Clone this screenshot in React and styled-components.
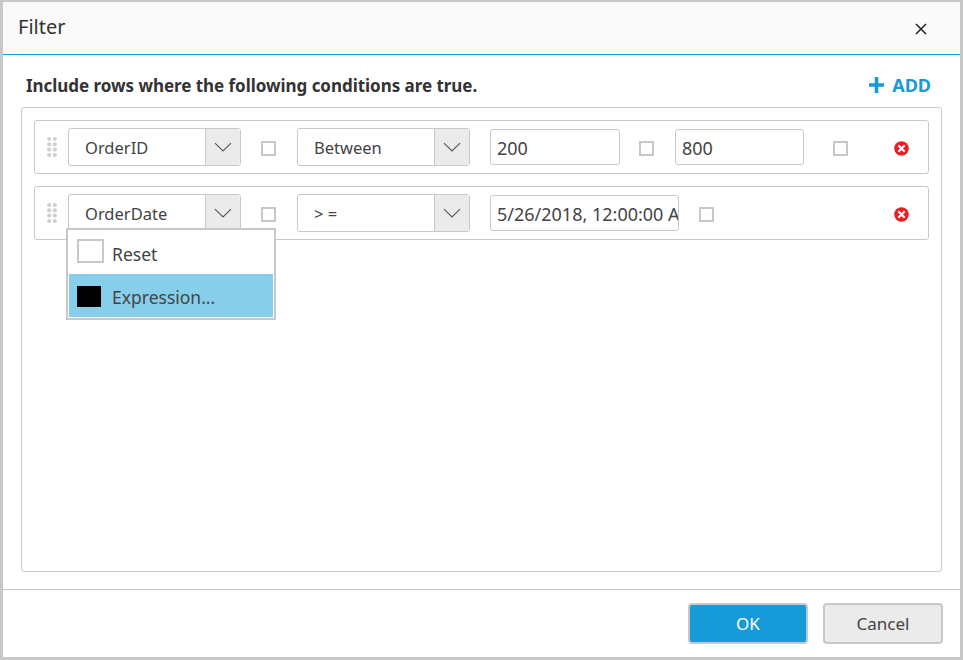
import React from "react";
import styled, { createGlobalStyle } from "styled-components";

const FONT = `"Noto Sans", "Open Sans", "Liberation Sans", sans-serif`;

const Global = createGlobalStyle`
  html, body { margin: 0; padding: 0; background: #c8c8c8; }
  * { box-sizing: border-box; }
`;

const Page = styled.div`
  width: 963px;
  height: 660px;
  padding: 2px 3px 3px 3px;
  font-family: ${FONT};
  color: #444;
`;

const Dialog = styled.div`
  height: 100%;
  background: #fff;
  display: flex;
  flex-direction: column;
`;

const Header = styled.div`
  height: 53px;
  flex: none;
  background: #fafafa;
  border-bottom: 1px solid #169bd8;
  display: flex;
  align-items: center;
  justify-content: space-between;
  padding: 0 33px 3px 15px;
`;

const Title = styled.div`
  font-size: 20px;
  color: #333;
`;

const CloseIcon = styled.svg`
  width: 12px;
  height: 12px;
  margin-top: 5px;
`;

const Body = styled.div`
  flex: 1;
  min-height: 0;
  display: flex;
  flex-direction: column;
  padding: 0 18px 17px 18px;
`;

const Toolbar = styled.div`
  height: 52px;
  flex: none;
  display: flex;
  align-items: center;
  justify-content: space-between;
  padding: 8px 11px 0 5px;
`;

const Lead = styled.div`
  font-size: 17px;
  font-weight: 700;
  color: #333;
  letter-spacing: -0.04px;
`;

const AddButton = styled.div`
  display: flex;
  align-items: center;
  gap: 8px;
  font-size: 18px;
  font-weight: 700;
  color: #169bd8;
`;

const Conditions = styled.div`
  flex: 1;
  border: 1px solid #c8c8c8;
  border-radius: 3px;
  padding: 12px;
  display: flex;
  flex-direction: column;
  gap: 12px;
`;

const Row = styled.div`
  position: relative;
  height: 54px;
  border: 1px solid #c8c8c8;
  border-radius: 3px;
  display: flex;
  align-items: center;
  padding: 0 19px 0 12px;
`;

const Grip = styled.svg`
  width: 10px;
  height: 22px;
  flex: none;
  margin-right: 11px;
`;

const Select = styled.div`
  width: 173px;
  height: 38px;
  flex: none;
  margin-left: ${(p) => p.$ml || 0}px;
  border: 1px solid #c8c8c8;
  border-radius: 3px;
  display: flex;
  background: #fff;
`;

const SelectValue = styled.div`
  flex: 1;
  padding-left: 16px;
  font-size: 16.5px;
  line-height: 38px;
  color: #444;
`;

const SelectArrow = styled.div`
  width: 35px;
  background: #ebebeb;
  border-left: 1px solid #c8c8c8;
  display: flex;
  align-items: center;
  justify-content: center;
`;

const Check = styled.div`
  width: 15px;
  height: 15px;
  flex: none;
  margin-left: ${(p) => p.$ml}px;
  margin-top: 2px;
  border: 2px solid #c8c8c8;
  background: #fff;
`;

const Input = styled.div`
  width: ${(p) => p.$w}px;
  height: 36px;
  flex: none;
  margin-left: ${(p) => p.$ml}px;
  border: 1px solid #c8c8c8;
  border-radius: 3px;
  padding-left: 6px;
  font-size: 18px;
  line-height: 36px;
  color: #444;
  white-space: nowrap;
  overflow: hidden;
`;

const RemoveIcon = styled.svg`
  width: 15px;
  height: 15px;
  flex: none;
  margin-left: auto;
  margin-top: 2px;
`;

const Menu = styled.div`
  position: absolute;
  left: 31px;
  top: 41px;
  width: 210px;
  height: 92px;
  background: #fff;
  border: 2px solid #c8c8c8;
  padding: 2px 1px 1px 1px;
  z-index: 2;
`;

const MenuItem = styled.div`
  height: ${(p) => (p.$active ? 43 : 42)}px;
  display: flex;
  align-items: center;
  padding: 2px 0 0 8px;
  background: ${(p) => (p.$active ? "#87ceeb" : "#fff")};
  font-size: 17.5px;
  color: #444;
`;

const Swatch = styled.div`
  width: ${(p) => (p.$filled ? 24 : 27)}px;
  height: ${(p) => (p.$filled ? 21 : 24)}px;
  margin-right: ${(p) => (p.$filled ? 11 : 8)}px;
  margin-top: ${(p) => (p.$filled ? 0 : -6)}px;
  background: ${(p) => (p.$filled ? "#000" : "#fff")};
  border: ${(p) => (p.$filled ? "none" : "2px solid #c8c8c8")};
`;

const Footer = styled.div`
  height: 68px;
  flex: none;
  border-top: 1px solid #c8c8c8;
  display: flex;
  justify-content: flex-end;
  gap: 15px;
  padding: 13px 17px 0 0;
`;

const Button = styled.div`
  width: 120px;
  height: 41px;
  border: 2px solid #c8c8c8;
  border-radius: 4px;
  background: ${(p) => (p.$primary ? "#169bd8" : "#ebebeb")};
  color: ${(p) => (p.$primary ? "#fff" : "#444")};
  font-size: 17px;
  display: flex;
  align-items: center;
  justify-content: center;
`;

const Chevron = () => (
  <svg width="18" height="10" viewBox="0 0 18 10" fill="none">
    <path d="M1 1.2 L9 9 L17 1.2" stroke="#555" strokeWidth="1.1" />
  </svg>
);

const DragHandle = () => (
  <Grip viewBox="0 0 10 22" fill="#d0d0d0">
    {[3, 8.3, 13.6, 19].map((y) => (
      <React.Fragment key={y}>
        <circle cx="2.2" cy={y} r="2.1" />
        <circle cx="7.8" cy={y} r="2.1" />
      </React.Fragment>
    ))}
  </Grip>
);

const Remove = () => (
  <RemoveIcon viewBox="0 0 15 15">
    <circle cx="7.5" cy="7.5" r="7.3" fill="#ec2024" />
    <path d="M5 5 L10 10 M10 5 L5 10" stroke="#fff" strokeWidth="2.2" strokeLinecap="round" />
  </RemoveIcon>
);

const SelectBox = ({ value, ml }) => (
  <Select $ml={ml}>
    <SelectValue>{value}</SelectValue>
    <SelectArrow>
      <Chevron />
    </SelectArrow>
  </Select>
);

export default function App() {
  return (
    <Page>
      <Global />
      <Dialog>
        <Header>
          <Title>Filter</Title>
          <CloseIcon viewBox="0 0 12 12" fill="none">
            <path d="M1 1 L11 11 M11 1 L1 11" stroke="#222" strokeWidth="1.5" />
          </CloseIcon>
        </Header>
        <Body>
          <Toolbar>
            <Lead>Include rows where the following conditions are true.</Lead>
            <AddButton>
              <svg width="15" height="16" viewBox="0 0 15 16" fill="#169bd8">
                <path d="M5.7 0h3.6v6.2H15v3.6H9.3V16H5.7V9.8H0V6.2h5.7z" />
              </svg>
              ADD
            </AddButton>
          </Toolbar>
          <Conditions>
            <Row>
              <DragHandle />
              <SelectBox value="OrderID" />
              <Check $ml={20} />
              <SelectBox value="Between" ml={21} />
              <Input $w={130} $ml={20}>200</Input>
              <Check $ml={19} />
              <Input $w={129} $ml={21}>800</Input>
              <Check $ml={29} />
              <Remove />
            </Row>
            <Row>
              <DragHandle />
              <SelectBox value="OrderDate" />
              <Check $ml={20} />
              <SelectBox value="> =" ml={21} />
              <Input $w={189} $ml={20}>5/26/2018, 12:00:00 AM</Input>
              <Check $ml={20} />
              <Remove />
              <Menu>
                <MenuItem>
                  <Swatch />
                  Reset
                </MenuItem>
                <MenuItem $active>
                  <Swatch $filled />
                  Expression...
                </MenuItem>
              </Menu>
            </Row>
          </Conditions>
        </Body>
        <Footer>
          <Button $primary>OK</Button>
          <Button>Cancel</Button>
        </Footer>
      </Dialog>
    </Page>
  );
}
